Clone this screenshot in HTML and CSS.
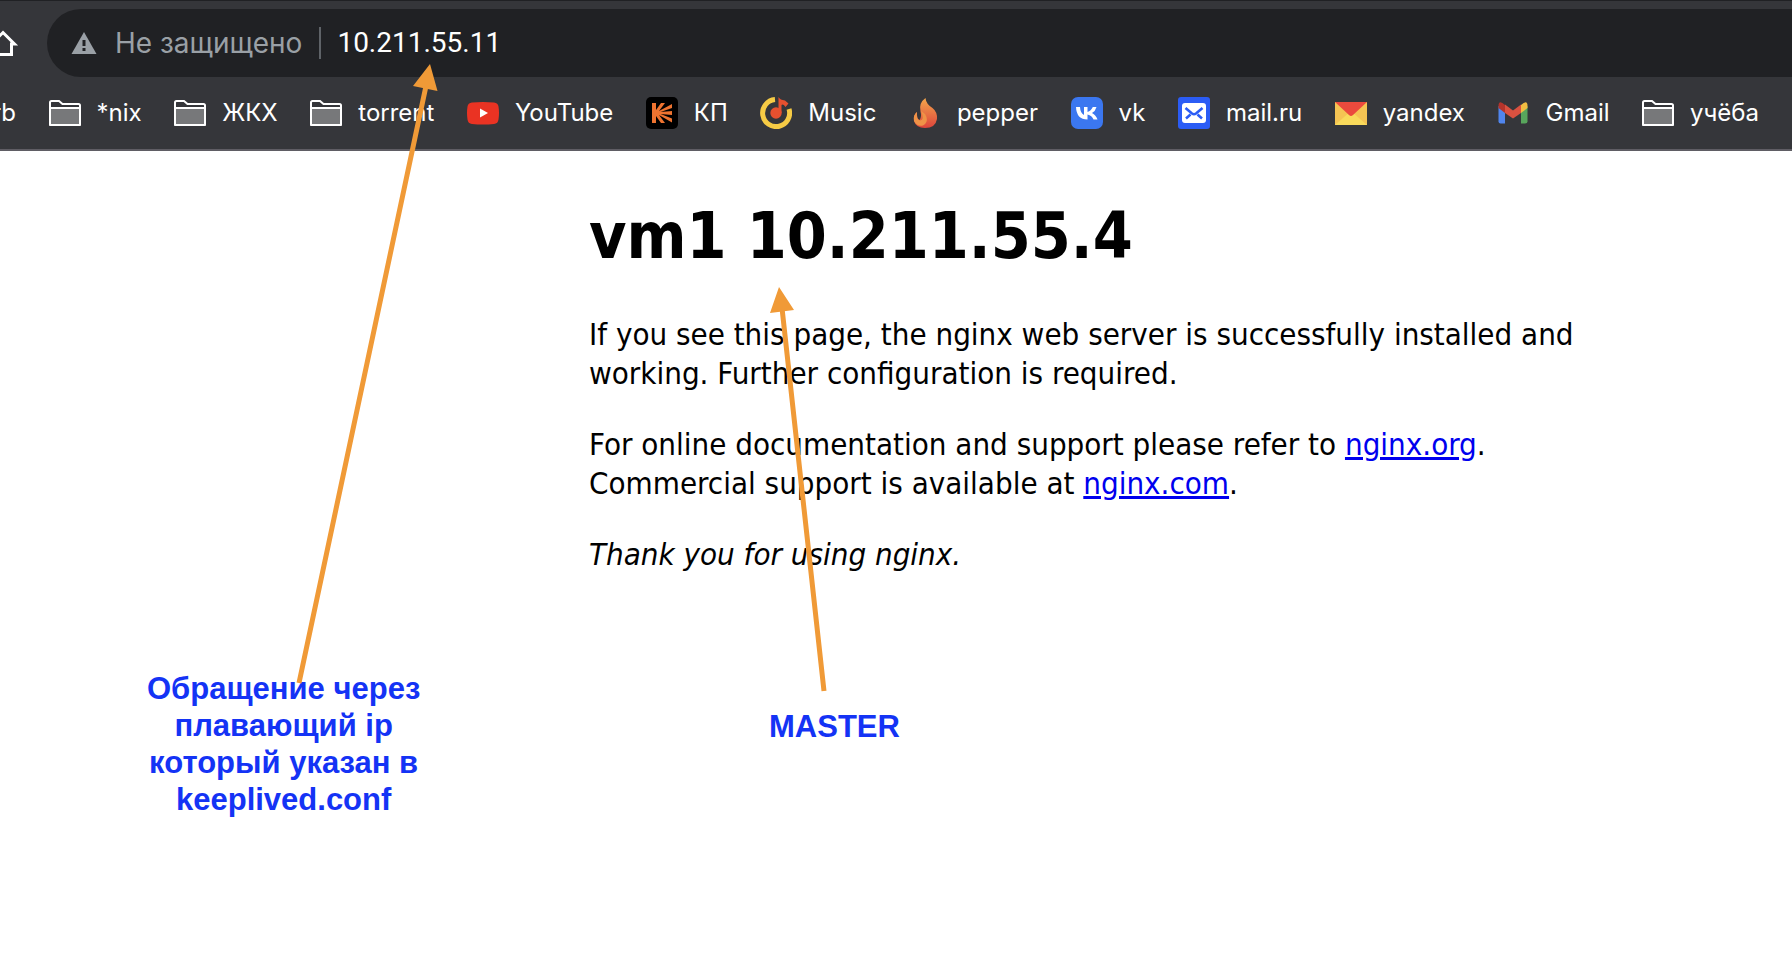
FILE: index.html
```html
<!DOCTYPE html>
<html lang="ru">
<head>
<meta charset="utf-8">
<title>vm1 10.211.55.4</title>
<link rel="stylesheet" href="styles.css">
</head>
<body>
<svg class="defs" aria-hidden="true">
  <symbol id="folder" viewBox="0 0 32 32">
    <path d="M1 9V5.500Q1 4 2.500 4H10L13.500 7H29.500Q31 7 31 8.500V26.500Q31 28 29.500 28H2.500Q1 28 1 26.500Z" fill="none" stroke="#fff" stroke-width="2"/>
    <path d="M2 12H30V27H2Z" fill="#77787a"/>
    <path d="M1 11H31M1 10V28H31V10" fill="none" stroke="#fff" stroke-width="2" stroke-linejoin="round"/>
  </symbol>
</svg>
<header class="browser">
  <div class="toolbar">
    <button class="home" type="button" aria-label="Home">
      <svg class="home-icon" viewBox="0 0 47 68"><path d="M-8 34.500L3 23.500L14.500 35H11.500V45.500H-6V35" fill="none" stroke="#fff" stroke-width="3"/></svg>
    </button>
    <div class="omnibox">
      <button class="security" type="button">
        <svg class="warn" viewBox="0 0 26 24"><path d="M13 1L25.500 23H.5Z" fill="#9aa0a6"/><path d="M11.500 9H14.500V15H11.500ZM11.500 17H14.500V20H11.500Z" fill="#202124"/></svg>
        <span>Не защищено</span>
      </button>
      <input class="url" type="text" value="10.211.55.11" aria-label="Address">
    </div>
  </div>
  <nav class="bookmarks">
    <a class="mark cut" href="#">rb</a>
    <a class="mark" href="#"><svg class="icon"><use href="#folder"/></svg>*nix</a>
    <a class="mark" href="#"><svg class="icon"><use href="#folder"/></svg>ЖКХ</a>
    <a class="mark" href="#"><svg class="icon"><use href="#folder"/></svg>torrent</a>
    <a class="mark" href="#"><svg class="icon" viewBox="0 0 32 32"><path d="M5 5.500Q16 4.500 27 5.500Q31 6 31.500 9.500Q32.500 16 31.500 22.500Q31 26.500 27 27Q16 28 5 27Q1 26.500 .5 22.500Q-.5 16 .5 9.500Q1 6 5 5.500Z" fill="#ea3323"/><path d="M13 11.500L21 16L13 20.500Z" fill="#fff"/></svg>YouTube</a>
    <a class="mark" href="#"><svg class="icon" viewBox="0 0 32 32"><rect width="32" height="32" rx="5"/><path d="M6 6H10V13L15 6H19L13 14L26 7V11L14.500 15L26 14V18L14.500 17L26 21.500V25.500L13 18L19 26H15L10 19V26H6Z" fill="#ee7330"/></svg>КП</a>
    <a class="mark" href="#"><svg class="icon" viewBox="0 0 32 32"><path d="M15 2.600A13.500 13.500 0 1 0 29 12" fill="none" stroke="#f6cb45" stroke-width="5"/><circle cx="16" cy="16" r="5.700" fill="#e6502f"/><path d="M18.500 16V0Q20 3 25 3.500L28.500 6.500L25.500 10Q23 6.500 21.500 8V16Z" fill="#e6502f"/></svg>Music</a>
    <a class="mark" href="#"><svg class="icon" viewBox="0 0 32 32"><defs><linearGradient id="flame" x1="0" y1="0" x2="0" y2="1"><stop offset="0" stop-color="#f3a64b"/><stop offset="1" stop-color="#dd453c"/></linearGradient></defs><path d="M16.500 1Q9.500 6 11.500 14.500Q13 20 10.500 23Q7.500 22 8 15Q4 18 5 24Q7 31 16 31Q26.500 31 28 22Q28.500 15 23.500 11Q17 7 16.500 1Z" fill="url(#flame)"/><path d="M8 15Q4 18 5 24Q8 30 14 28.500Q19 26 17.500 20Q16 16 12 14Q16 23 11 23.500Q7 22 8 15Z" fill="#ef9347"/></svg>pepper</a>
    <a class="mark" href="#"><svg class="icon" viewBox="0 0 32 32"><rect width="32" height="32" rx="7" fill="#3b77f0"/><path d="M5 10H9Q9.300 16 13 18V10H16.500V15Q20 14 21.800 10H25.500Q24.500 14 21 16Q25 18 26.500 22.500H22.500Q21 18.500 16.500 17.500V22.500Q5.500 22.500 5 10Z" fill="#fff"/></svg>vk</a>
    <a class="mark" href="#"><svg class="icon" viewBox="0 0 32 32"><rect width="32" height="32" rx="3" fill="#2b5cf5"/><rect x="4" y="6" width="24" height="20" rx="3" fill="#fff"/><path d="M7.500 11L14 16.500Q16 18 18 16.500L24.500 11M8 21.500L12.500 17.500M24 21.500L19.500 17.500" fill="none" stroke="#2b5cf5" stroke-width="2.600"/></svg>mail.ru</a>
    <a class="mark" href="#"><svg class="icon" viewBox="0 0 32 32"><path d="M0 5H32V28H0Z" fill="#f5c453"/><path d="M0 28L16 14L32 28Z" fill="#f9da5b"/><path d="M0 5H32L18 18Q16 20 14 18Z" fill="#eb4a3d"/></svg>yandex</a>
    <a class="mark" href="#"><svg class="icon" viewBox="0 0 32 32"><path d="M1.500 9V24.500Q1.500 26.500 3.500 26.500H8V13Z" fill="#5085ed"/><path d="M24 13V26.500H28Q30.500 26.500 30.500 24.500V9Z" fill="#58a55c"/><path d="M24 8Q30.500 2 30.500 9V11L24 16Z" fill="#f1bd42"/><path d="M8 8Q1.500 2 1.500 9V11L8 16Z" fill="#b3342b"/><path d="M8 7.500L16 13.500L24 7.500V16L16 21.500L8 16Z" fill="#d95140"/></svg>Gmail</a>
    <a class="mark" href="#"><svg class="icon"><use href="#folder"/></svg>учёба</a>
  </nav>
</header>
<main class="page" lang="en">
  <h1>vm1 10.211.55.4</h1>
  <p>If you see this page, the nginx web server is successfully installed and working. Further configuration is required.</p>
  <p>For online documentation and support please refer to <a href="http://nginx.org/">nginx.org</a>.<br>Commercial support is available at <a href="http://nginx.com/">nginx.com</a>.</p>
  <p><em>Thank you for using nginx.</em></p>
</main>
<aside class="notes">
  <p class="note note-ip">Обращение через<br>плавающий ip<br>который указан в<br>keeplived.conf</p>
  <p class="note note-master">MASTER</p>
  <svg class="arrows" viewBox="0 0 1792 958" aria-hidden="true">
    <path d="M299 683L426 86M824 691L782 308" fill="none" stroke="#f09a37" stroke-width="5"/>
    <path d="M430 64L437.500 91L413 86ZM779 287L794 310L770 313Z" fill="#f09a37"/>
  </svg>
</aside>
</body>
</html>
```
FILE: styles.css
```css
body {
  margin: 0;
  position: relative;
  min-height: 100vh;
  overflow: hidden;
  background: #fff;
  color: #000;
}

.defs {
  position: absolute;
  width: 0;
  height: 0;
}

/* Browser chrome */
.browser {
  background: #35363a;
  border-top: 1px solid #202124;
  border-bottom: 2px solid #5f5d64;
  font-family: Inter, "Noto Sans", sans-serif;
  color: #fff;
}

.toolbar {
  display: flex;
  padding-top: 8px;
}

.home {
  flex: none;
  width: 47px;
  height: 68px;
  padding: 0;
  border: 0;
  background: none;
}

.home-icon {
  display: block;
  width: 47px;
  height: 68px;
}

.omnibox {
  flex: 1;
  display: flex;
  align-items: center;
  height: 68px;
  padding-left: 24px;
  border-radius: 34px 0 0 34px;
  background: #202124;
  font-size: 28px;
}

.security {
  display: flex;
  align-items: center;
  gap: 18px;
  height: 32px;
  padding: 0 17px 0 0;
  border: 0;
  border-right: 2px solid #5f6368;
  background: none;
  color: #9aa0a6;
  font: inherit;
  white-space: nowrap;
}

.warn {
  width: 26px;
  height: 24px;
}

.url {
  flex: 1;
  min-width: 0;
  padding: 0 0 0 16px;
  border: 0;
  outline: 0;
  background: none;
  color: #fff;
  font: 28px/32px Roboto, Inter, sans-serif;
}

.bookmarks {
  display: flex;
  align-items: center;
  justify-content: space-between;
  height: 72px;
  padding-right: 33px;
  white-space: nowrap;
}

.mark {
  flex: none;
  display: flex;
  align-items: center;
  gap: 16px;
  color: #fff;
  font-size: 24px;
  line-height: 32px;
  text-decoration: none;
}

.cut {
  width: 16px;
  justify-content: flex-end;
  overflow: hidden;
}

.icon {
  width: 32px;
  height: 32px;
}

/* Server page */
.page {
  max-width: 1020px;
  margin-left: 589px;
  font: 31px/39px "DejaVu Sans Condensed", "DejaVu Sans", sans-serif;
}

h1 {
  margin: 46px 0 40px;
  font-size: 64px;
  line-height: 78px;
}

.page p {
  margin: 0 0 32px;
}

.page a {
  color: #0000ee;
}

/* Annotations drawn over the window */
.notes {
  position: absolute;
  top: 0;
  left: 0;
  pointer-events: none;
}

.note {
  position: absolute;
  margin: 0;
  color: #1433f5;
  font: bold 31px/37px "Liberation Sans", Arial, sans-serif;
  text-align: center;
  white-space: nowrap;
}

.note-ip {
  left: 147px;
  top: 670px;
}

.note-master {
  left: 769px;
  top: 708px;
}

.arrows {
  position: absolute;
  top: 0;
  left: 0;
  width: 1792px;
  height: 958px;
}
```
